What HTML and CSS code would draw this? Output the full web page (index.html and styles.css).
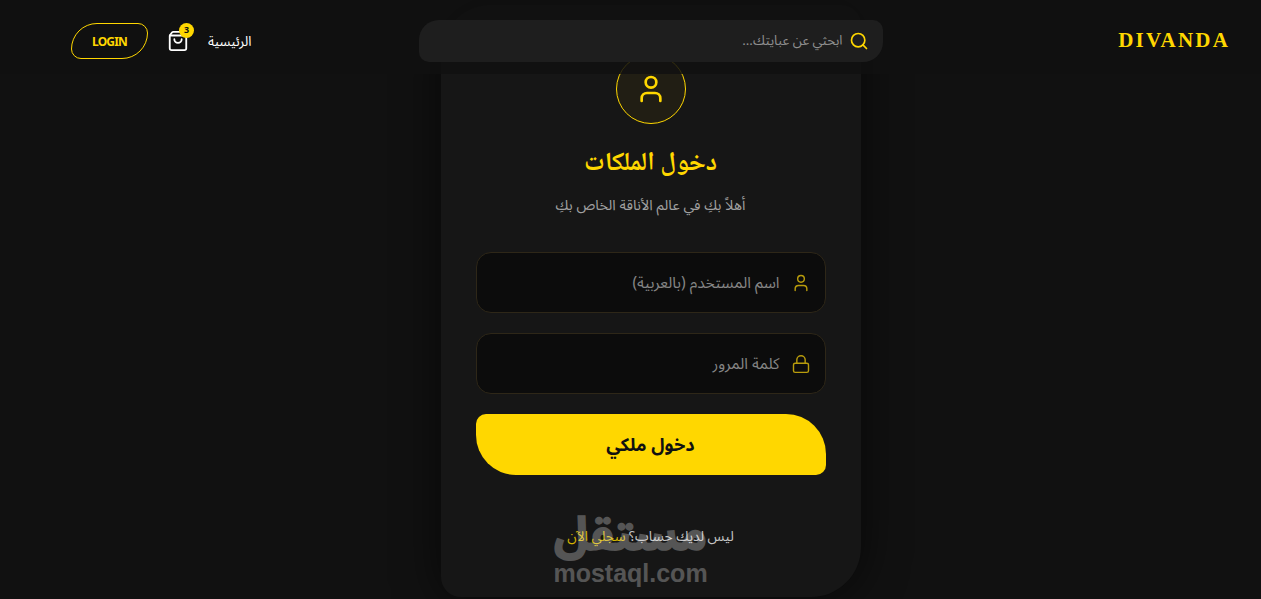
FILE: index.html
```html
<!DOCTYPE html>
<html lang="ar" dir="rtl">
<head>
    <meta charset="UTF-8">
    <meta name="viewport" content="width=device-width, initial-scale=1.0">
    <title>DIVANDA</title>
    <link rel="stylesheet" href="styles.css">
</head>
<body>
    <header class="topbar">
        <a class="logo" href="#">DIVANDA</a>

        <div class="search">
            <svg class="search_icon" viewBox="0 0 24 24"><circle cx="11" cy="11" r="8"/><path d="m21 21-4.3-4.3"/></svg>
            <span>ابحثي عن عبايتك...</span>
        </div>

        <nav class="nav">
            <a class="nav_link" href="#">الرئيسية</a>
            <a class="cart" href="#">
                <svg viewBox="0 0 24 24"><path d="M16 10a4 4 0 0 1-8 0"/><path d="M3.103 6.034h17.794"/><path d="M3.4 5.467a2 2 0 0 0-.4 1.2V20a2 2 0 0 0 2 2h14a2 2 0 0 0 2-2V6.667a2 2 0 0 0-.4-1.2l-2.1-2.8A2 2 0 0 0 17 2H7a2 2 0 0 0-1.6.8z"/></svg>
                <span class="badge">3</span>
            </a>
            <a class="login_btn" href="#">LOGIN</a>
        </nav>
    </header>

    <main class="page">
        <section class="card">
            <div class="avatar">
                <svg viewBox="0 0 24 24"><path d="M19 21v-2a4 4 0 0 0-4-4H9a4 4 0 0 0-4 4v2"/><circle cx="12" cy="7" r="4"/></svg>
            </div>
            <h1 class="title">دخول الملكات</h1>
            <p class="subtitle">أهلاً بكِ في عالم الأناقة الخاص بكِ</p>

            <form class="form">
                <div class="field">
                    <svg class="field_icon" viewBox="0 0 24 24"><path d="M19 21v-2a4 4 0 0 0-4-4H9a4 4 0 0 0-4 4v2"/><circle cx="12" cy="7" r="4"/></svg>
                    <span>اسم المستخدم (بالعربية)</span>
                </div>
                <div class="field">
                    <svg class="field_icon" viewBox="0 0 24 24"><rect x="3" y="11" width="18" height="11" rx="2"/><path d="M7 11V7a5 5 0 0 1 10 0v4"/></svg>
                    <span>كلمة المرور</span>
                </div>
                <button class="submit" type="button">دخول ملكي</button>
            </form>

            <p class="signup">ليس لديك حساب؟ <a href="#">سجلي الآن</a></p>
        </section>
    </main>

    <div class="watermark">
        <span class="wm_ar">مستقل</span>
        <span class="wm_en">mostaql.com</span>
    </div>
</body>
</html>
```

FILE: styles.css
```css
*{
    margin: 0px;
    padding: 0px;
    box-sizing: border-box;
}
html,body{
    height: 599px;
    overflow: hidden;
}
body{
    background-color: #111111;
    color: #ffffff;
    font-family: "Noto Sans Arabic", "DejaVu Sans", sans-serif;
    position: relative;
}
a{
    text-decoration: none;
    color: inherit;
}
svg{
    fill: none;
    stroke: currentColor;
    stroke-width: 2;
    stroke-linecap: round;
    stroke-linejoin: round;
}
.topbar{
    position: absolute;
    top: 0px;
    left: 0px;
    right: 0px;
    height: 74px;
    padding: 20px 31px 12px 71px;
    background-color: rgba(17,17,17,0.85);
    display: grid;
    grid-template-columns: 1fr 464px 1fr;
    align-items: center;
    z-index: 2;
}
.logo{
    font-family: "Liberation Serif", serif;
    font-weight: 700;
    font-size: 21px;
    letter-spacing: 2.2px;
    color: #ffd700;
    direction: ltr;
    justify-self: start;
    margin-bottom: 2px;
}
.search{
    height: 42px;
    background-color: #1e1e1e;
    border-radius: 20px 10px 20px 10px;
    display: flex;
    align-items: center;
    gap: 6px;
    padding: 0px 14px;
    font-size: 13.3px;
    color: #8f8f8f;
}
.search_icon{
    width: 20px;
    height: 20px;
    color: #ffd700;
}
.nav{
    display: flex;
    align-items: center;
    gap: 19px;
    justify-self: end;
}
.nav_link{
    font-size: 13.5px;
}
.cart{
    position: relative;
    width: 22px;
    height: 22px;
}
.cart svg{
    width: 22px;
    height: 22px;
}
.badge{
    position: absolute;
    top: -7px;
    left: 12px;
    width: 15px;
    height: 15px;
    border-radius: 50%;
    background-color: #ffd700;
    color: #111111;
    font-size: 9px;
    font-weight: 700;
    text-align: center;
    line-height: 15px;
}
.login_btn{
    width: 77px;
    height: 36px;
    border: 1px solid #ffd700;
    border-radius: 26px 10px 26px 10px;
    color: #ffd700;
    font-family: "Noto Sans", sans-serif;
    font-weight: 700;
    font-size: 12px;
    letter-spacing: -0.8px;
    display: flex;
    align-items: center;
    justify-content: center;
}
.page{
    padding: 5px 31px 0px 71px;
    display: flex;
    justify-content: center;
}
.card{
    width: 420px;
    height: 592px;
    padding: 49px 35px 0px;
    background-color: #161616;
    border-radius: 50px 20px 50px 20px;
    box-shadow: 0px 0px 45px rgba(0,0,0,0.6);
    display: flex;
    flex-direction: column;
    align-items: center;
}
.avatar{
    width: 70px;
    height: 70px;
    border: 1px solid #ffd700;
    border-radius: 50%;
    background-color: #211e14;
    color: #ffd700;
    display: flex;
    align-items: center;
    justify-content: center;
}
.avatar svg{
    width: 32px;
    height: 32px;
}
.title{
    font-family: "Noto Naskh Arabic", "Amiri", "DejaVu Serif", serif;
    font-size: 26px;
    font-weight: 700;
    color: #ffd700;
    margin-top: 20px;
    line-height: 40px;
}
.subtitle{
    font-size: 14.4px;
    color: #a0a0a0;
    margin-top: 12px;
    line-height: 20px;
}
.form{
    width: 100%;
    margin-top: 36px;
    display: flex;
    flex-direction: column;
    gap: 20px;
}
.field{
    height: 61px;
    background-color: #0c0c0c;
    border: 1px solid #2e2718;
    border-radius: 15px;
    display: flex;
    align-items: center;
    gap: 11px;
    padding: 0px 14px;
    font-size: 15.5px;
    color: #858585;
}
.field_icon{
    width: 20px;
    height: 20px;
    color: #b89c0c;
    stroke-width: 1.7;
}
.submit{
    height: 61px;
    border: none;
    background-color: #ffd700;
    color: #111111;
    border-radius: 10px 40px 10px 40px;
    font-family: inherit;
    font-size: 18px;
    font-weight: 700;
}
.signup{
    margin-top: 52px;
    font-size: 13.8px;
    color: #c4c4c4;
    line-height: 20px;
}
.signup a{
    color: #d4b300;
}
.watermark{
    position: absolute;
    left: 554px;
    top: 513px;
    width: 153px;
    display: flex;
    flex-direction: column;
    align-items: center;
    color: #ffffff;
    opacity: 0.27;
    font-weight: 700;
    z-index: 3;
    direction: ltr;
}
.wm_ar{
    font-size: 46px;
    line-height: 46px;
    direction: rtl;
    -webkit-text-stroke: 1.5px #ffffff;
}
.wm_en{
    font-family: "Liberation Sans", sans-serif;
    font-size: 25px;
    line-height: 28px;
}
```
